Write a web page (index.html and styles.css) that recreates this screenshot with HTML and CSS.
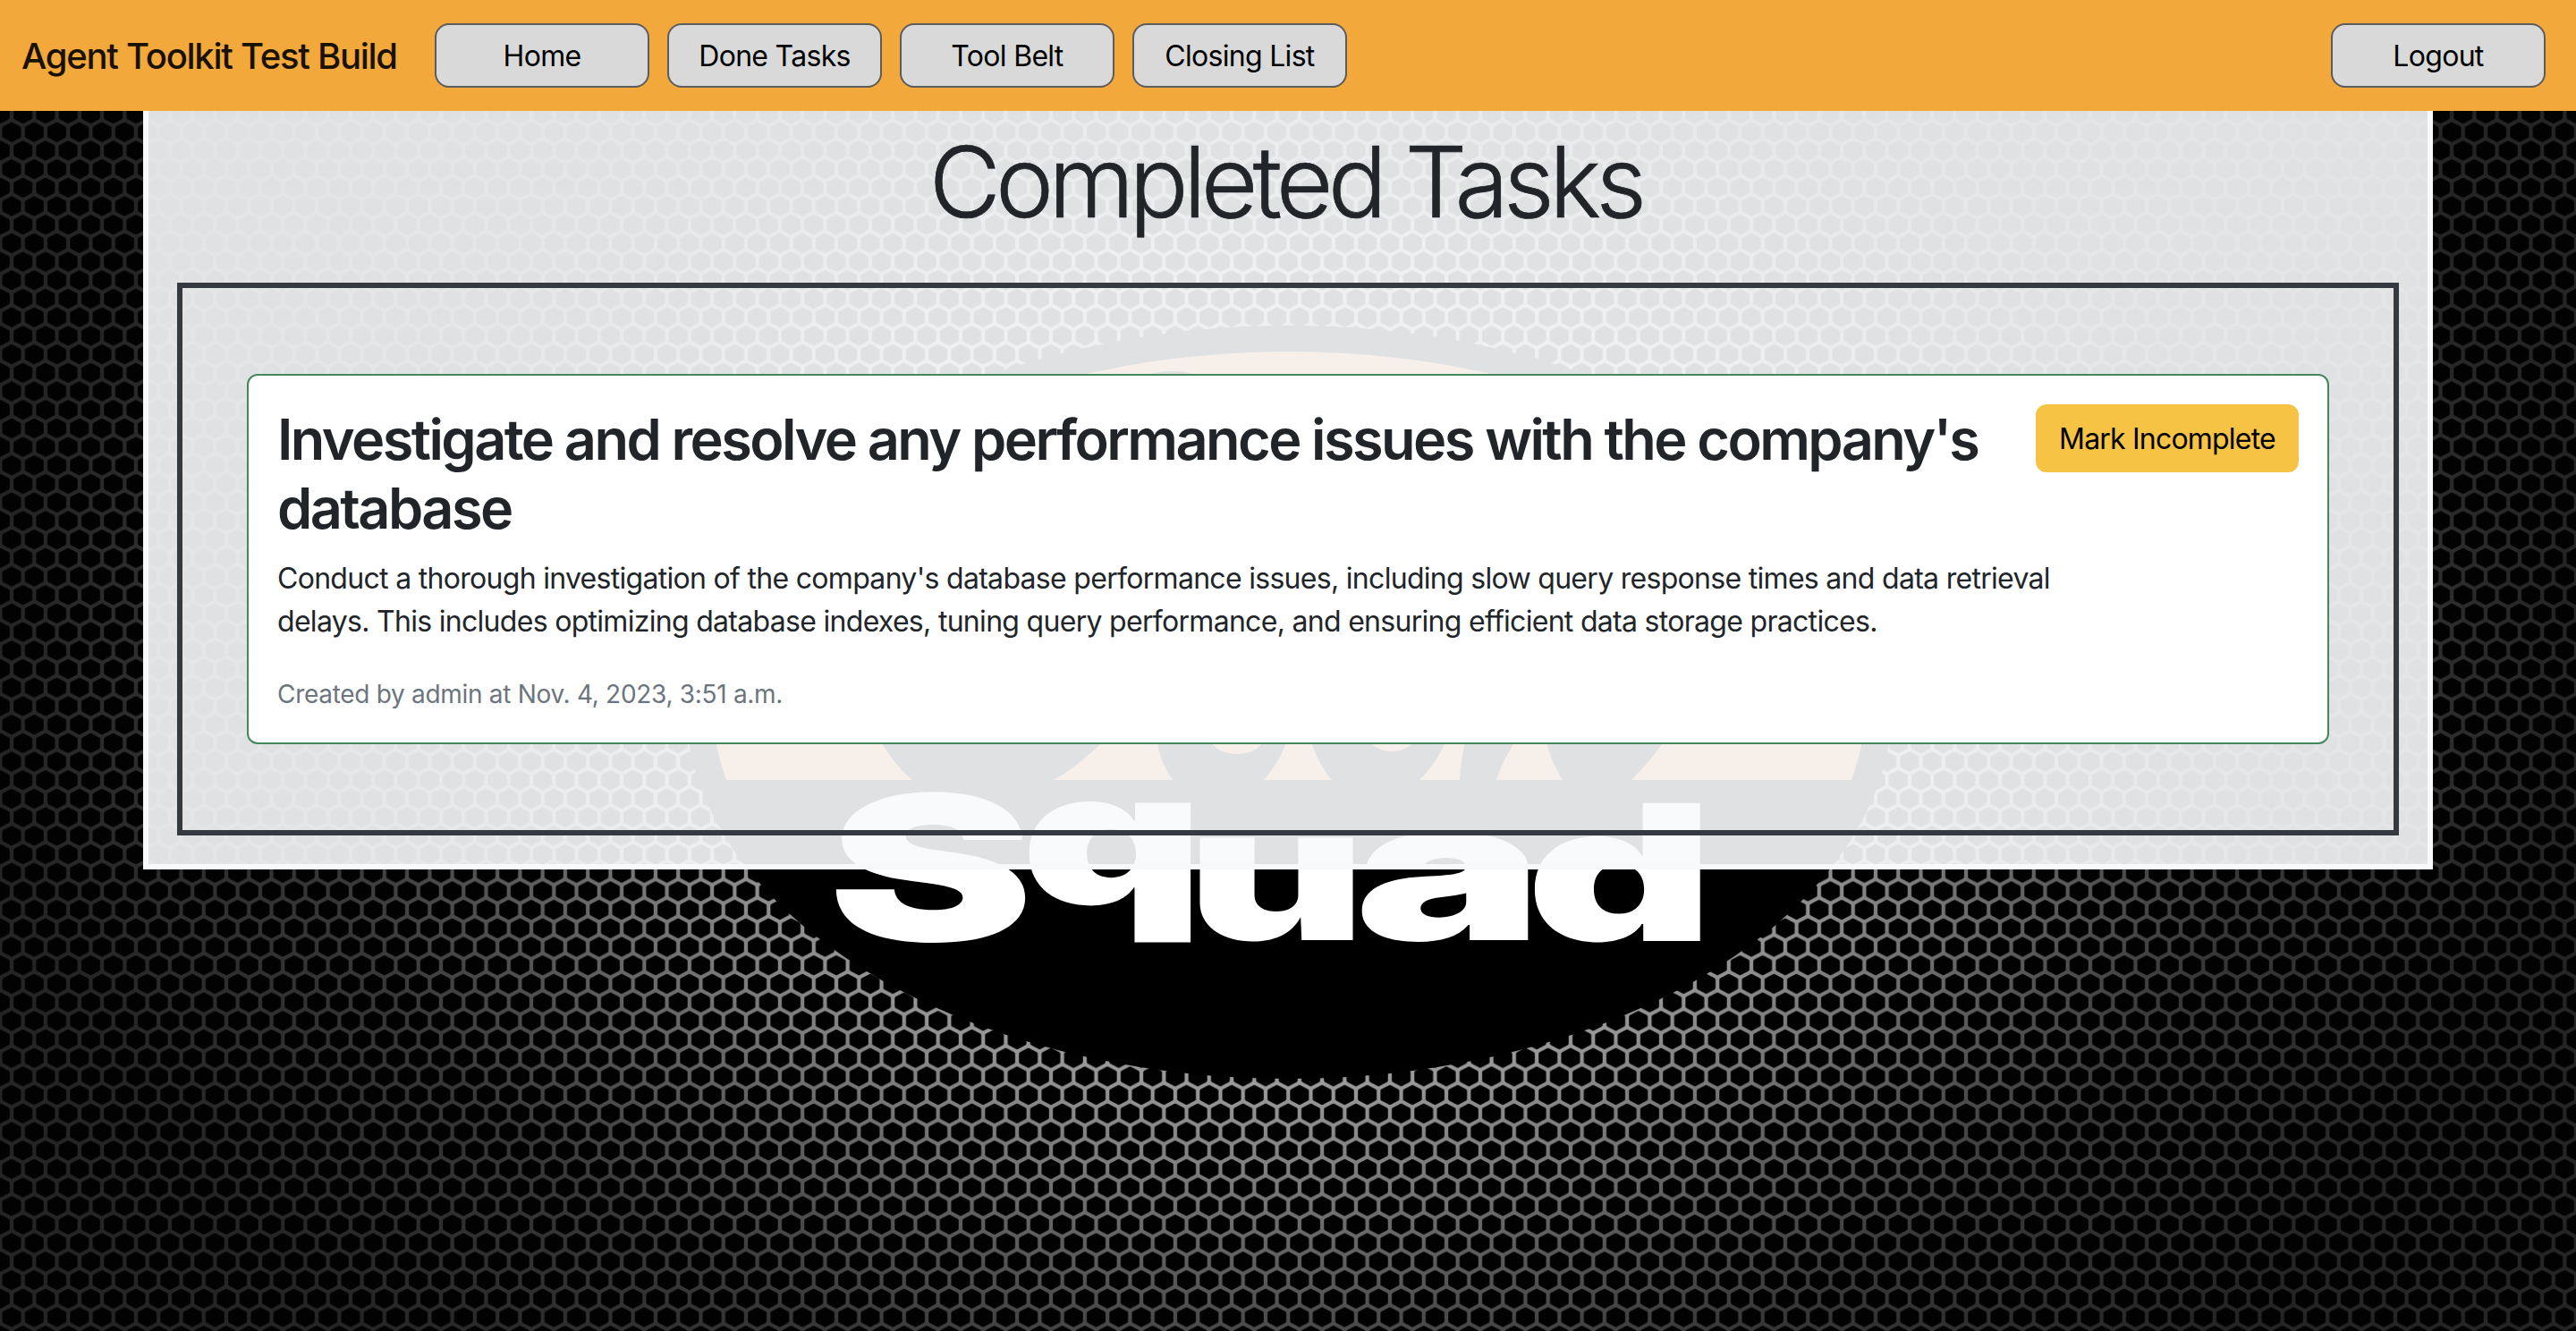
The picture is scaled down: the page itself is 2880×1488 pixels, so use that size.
FILE: index.html
```html
<!DOCTYPE html>
<html lang="en">
<head>
<meta charset="utf-8">
<title>Completed Tasks</title>
<link rel="stylesheet" href="styles.css">
</head>
<body>
<svg class="backdrop" viewBox="0 0 2880 1488" aria-hidden="true">
  <defs>
    <radialGradient id="glow" gradientUnits="userSpaceOnUse" cx="0" cy="0" r="1" gradientTransform="translate(1440 760) scale(1540 1120)">
      <stop offset="0.4" stop-color="#9c9c9c"/>
      <stop offset="0.51" stop-color="#787878"/>
      <stop offset="0.63" stop-color="#505050"/>
      <stop offset="0.72" stop-color="#383838"/>
      <stop offset="0.93" stop-color="#252525"/>
    </radialGradient>
    <pattern id="mesh" patternUnits="userSpaceOnUse" x="0.4" y="913.6" width="25.26" height="41.4">
      <g class="cell">
        <path d="M0-9L8.5-4.6V4.6L0 9L-8.5 4.6V-4.6Z"/>
        <path d="M25.26-9L33.76-4.6V4.6L25.26 9L16.76 4.6V-4.6Z"/>
        <path d="M12.63 11.7L21.13 16.1V25.3L12.63 29.7L4.13 25.3V16.1Z"/>
        <path d="M0 32.4L8.5 36.8V46L0 50.4L-8.5 46V36.8Z"/>
        <path d="M25.26 32.4L33.76 36.8V46L25.26 50.4L16.76 46V36.8Z"/>
      </g>
    </pattern>
    <clipPath id="dome"><rect x="780" y="380" width="1320" height="492"/></clipPath>
  </defs>
  <rect width="2880" height="1488" fill="url(#glow)"/>
  <rect width="2880" height="1488" fill="url(#mesh)"/>
  <ellipse cx="1441" cy="785" rx="675" ry="421"/>
  <ellipse class="sun" cx="1441" cy="785" rx="645" ry="392" clip-path="url(#dome)"/>
  <ellipse cx="1310" cy="434" rx="45" ry="19"/>
  <path d="M980 820Q996 852 1021 873H1177Q1212 852 1242 820Z"/>
  <path d="M1292 820Q1296 852 1312 873H1412Q1434 848 1441 820Z"/>
  <path d="M1464 820Q1470 850 1490 873H1586Q1610 850 1619 820Z"/>
  <path d="M1640 820Q1633 850 1632 873H1672Q1682 845 1700 820Z"/>
  <path d="M1727 820Q1732 850 1748 873H1823Q1848 848 1866 820Z"/>
  <ellipse class="sun" cx="1383" cy="826" rx="29" ry="17"/>
  <ellipse class="sun" cx="1556" cy="824" rx="25" ry="16"/>
  <g class="squad">
    <text x="925" y="1052" font-size="226" textLength="231" lengthAdjust="spacingAndGlyphs">S</text>
    <text x="1141" y="1011" font-size="208" textLength="206" lengthAdjust="spacingAndGlyphs">q</text>
    <text x="1326" y="1051" font-size="210" textLength="202" lengthAdjust="spacingAndGlyphs">u</text>
    <text x="1514" y="1051" font-size="220" textLength="212" lengthAdjust="spacingAndGlyphs">a</text>
    <text x="1706" y="1052" font-size="212" textLength="211" lengthAdjust="spacingAndGlyphs">d</text>
  </g>
</svg>
<nav class="navbar">
  <a class="brand">Agent Toolkit Test Build</a>
  <a class="nav-button">Home</a>
  <a class="nav-button">Done Tasks</a>
  <a class="nav-button">Tool Belt</a>
  <a class="nav-button">Closing List</a>
  <a class="nav-button logout">Logout</a>
</nav>
<main class="panel">
  <h1 class="page-title">Completed Tasks</h1>
  <section class="task-list">
    <article class="task">
      <div class="task-body">
        <h2 class="task-title">Investigate and resolve any performance issues with the company's<br>database</h2>
        <p class="task-text">Conduct a thorough investigation of the company's database performance issues, including slow query response times and data retrieval<br>delays. This includes optimizing database indexes, tuning query performance, and ensuring efficient data storage practices.</p>
        <p class="task-meta">Created by admin at Nov. 4, 2023, 3:51 a.m.</p>
      </div>
      <button class="mark">Mark Incomplete</button>
    </article>
  </section>
</main>
</body>
</html>
```
FILE: styles.css
```css
* { box-sizing: border-box; }
body {
  margin: 0;
  height: 1488px;
  overflow: hidden;
  background: #000;
  color: #212529;
  font-family: Inter, "Liberation Sans", sans-serif;
  font-size: 32px;
  line-height: 48px;
}
h1, h2, p { margin: 0; }
.backdrop {
  position: absolute;
  left: 0;
  top: 0;
  width: 2880px;
  height: 1488px;
  z-index: -1;
}
.cell { fill: #020202; stroke: #020202; stroke-width: 4; stroke-linejoin: round; }
.sun { fill: #eb8c4b; }
.squad { fill: #fff; font-family: Inter, sans-serif; font-weight: 900; }
.navbar {
  display: flex;
  align-items: center;
  gap: 20px;
  height: 124px;
  padding: 0 34px 0 24px;
  background: #f3a83b;
}
.brand {
  width: 442px;
  padding-top: 2px;
  color: #181104;
  font-size: 40px;
  font-weight: 500;
  letter-spacing: -1.27px;
  white-space: nowrap;
}
.nav-button {
  width: 240px;
  height: 72px;
  border: 2px solid #5c5c5c;
  border-radius: 16px;
  background: #d9d9d9;
  color: #000;
  line-height: 70px;
  text-align: center;
  letter-spacing: -0.7px;
}
.logout { margin-left: auto; }
.panel {
  width: 2560px;
  height: 848px;
  margin: 0 auto;
  padding: 12px 32px 32px;
  border: 6px solid #f8f9fb;
  border-top: 0;
  background: rgba(248, 250, 252, 0.9);
  background-clip: padding-box;
}
.page-title {
  height: 180px;
  padding-right: 6px;
  font-size: 110px;
  font-weight: 300;
  line-height: 134px;
  letter-spacing: -5.8px;
  text-align: center;
  -webkit-text-stroke: 0.7px #212529;
}
.task-list {
  height: 618px;
  padding: 96px 72px;
  border: 6px solid #343a40;
}
.task {
  display: flex;
  justify-content: space-between;
  align-items: flex-start;
  height: 414px;
  padding: 32px;
  border: 2px solid #41885d;
  border-radius: 12px;
  background: #fff;
}
.task-body {
  padding-top: 1px;
  white-space: nowrap;
}
.task-title {
  margin-bottom: 16px;
  font-size: 63px;
  font-weight: 600;
  line-height: 77px;
  letter-spacing: -2.57px;
}
.task-text { margin-bottom: 33px; letter-spacing: -0.7px; }
.task-meta { color: #6c757d; font-size: 28px; letter-spacing: -0.3px; }
.mark {
  width: 294px;
  height: 76px;
  padding: 2px 0 0;
  border: 0;
  border-radius: 12px;
  background: #f6c344;
  color: #000;
  font: inherit;
  letter-spacing: -0.8px;
  flex: none;
  margin-left: -200px;
}
```
